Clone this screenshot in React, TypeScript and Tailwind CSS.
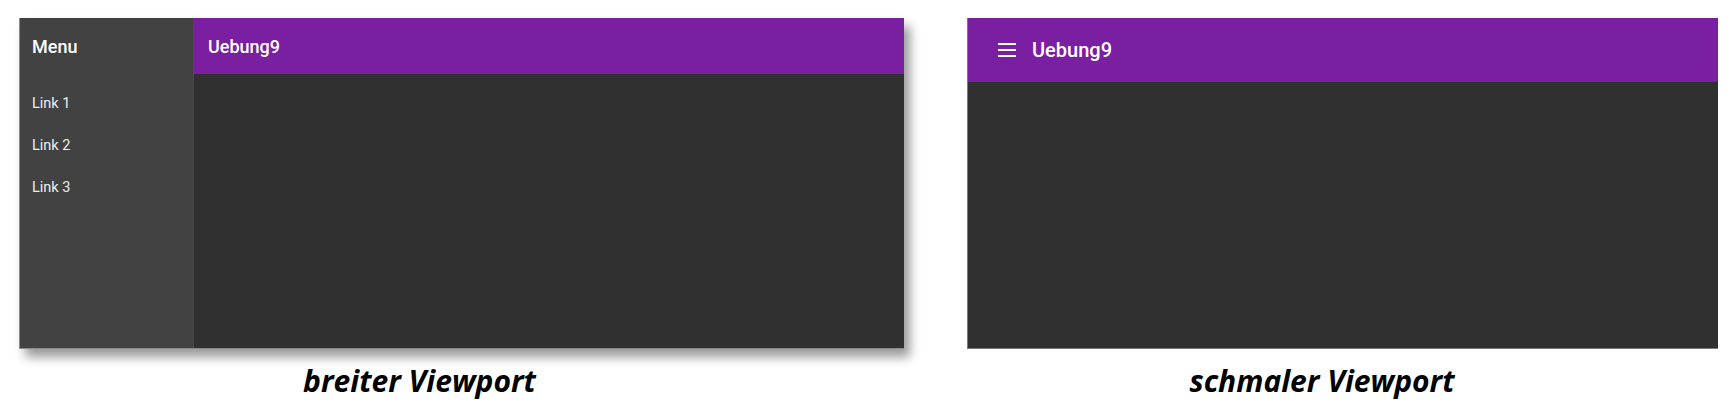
import React from 'react'

const links = ['Link 1', 'Link 2', 'Link 3']

function MenuIcon() {
  return (
    <svg width="24" height="24" viewBox="0 0 24 24" fill="none" stroke="white" strokeWidth="2">
      <path d="M3 6h18M3 12h18M3 18h18" />
    </svg>
  )
}

function WideView() {
  return (
    <div className="flex w-[885px] flex-col">
      <div className="flex h-[331px] w-[885px] border-b border-l border-[#8c8c8c] shadow-[6px_8px_10px_rgba(0,0,0,0.4)]">
        {/* Sidebar */}
        <div className="flex w-[174px] flex-col border-r border-[#4b4b4b] bg-[#424242]">
          <div className="flex h-[56px] items-center pl-[12px] text-[18px] font-medium text-white">Menu</div>
          <div className="flex flex-col pt-[9px]">
            {links.map((l) => (
              <div key={l} className="flex h-[42px] items-center pl-[12px] text-[14.5px] text-[#eeeeee]">
                {l}
              </div>
            ))}
          </div>
        </div>
        {/* Content */}
        <div className="flex flex-1 flex-col bg-[#303030]">
          <div className="flex h-[56px] items-center bg-[#7b1fa2] pl-[14px] text-[18px] font-medium text-white">
            Uebung9
          </div>
        </div>
      </div>
      <div className="mt-[17px] pr-[84px] text-center text-[30px] leading-[1] font-bold italic text-black [font-family:'Open_Sans',sans-serif]">
        breiter Viewport
      </div>
    </div>
  )
}

function NarrowView() {
  return (
    <div className="flex w-[751px] flex-col">
      <div className="flex h-[331px] flex-col border-b border-l border-[#7a7a7a] bg-[#303030]">
        <div className="flex h-[64px] items-center bg-[#7b1fa2] pl-[27px] text-white">
          <MenuIcon />
          <span className="ml-[13px] text-[20px] font-medium">Uebung9</span>
        </div>
      </div>
      <div className="mt-[17px] pr-[41px] text-center text-[30px] leading-[1] font-bold italic text-black [font-family:'Open_Sans',sans-serif]">
        schmaler Viewport
      </div>
    </div>
  )
}

export default function App() {
  return (
    <div className="flex h-[413px] w-[1735px] gap-[63px] bg-white pl-[19px] pt-[18px] font-['Roboto',sans-serif]">
      <WideView />
      <NarrowView />
    </div>
  )
}
